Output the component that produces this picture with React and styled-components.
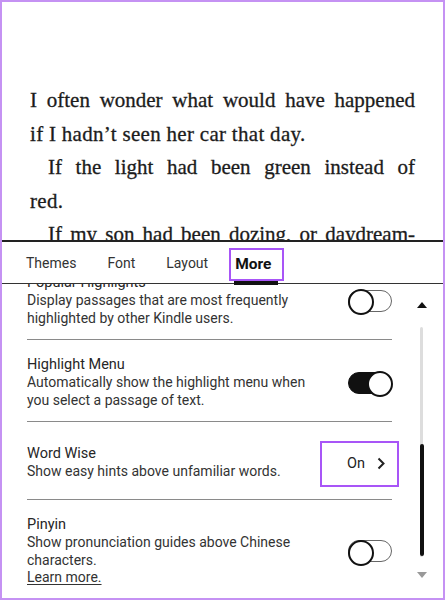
import styled, { createGlobalStyle } from 'styled-components';

const Global = createGlobalStyle`
  html, body { margin: 0; padding: 0; background: #fff; }
  * { box-sizing: border-box; }
`;

const Frame = styled.div`
  width: 445px;
  height: 600px;
  border: 2px solid #c592f3;
  display: flex;
  flex-direction: column;
  overflow: hidden;
  background: #fff;
`;

const Book = styled.div`
  height: 238px;
  overflow: hidden;
  padding: 82px 28px 0 28px;
  font-family: "Liberation Serif", serif;
  font-size: 21px;
  line-height: 33.5px;
  color: #1c1c1c;
  -webkit-text-stroke: 0.3px #1c1c1c;
`;

const BookLine = styled.div`
  white-space: nowrap;
  text-align: ${(p) => (p.$full ? 'justify' : 'left')};
  text-align-last: ${(p) => (p.$full ? 'justify' : 'left')};
  padding-left: ${(p) => (p.$indent ? '18px' : '0')};
  letter-spacing: ${(p) => (p.$full ? '0' : '0.3px')};
`;

const Panel = styled.div`
  flex: 1;
  display: flex;
  flex-direction: column;
  border-top: 2px solid #222;
  font-family: Roboto, sans-serif;
  color: #333;
  min-height: 0;
`;

const Tabs = styled.div`
  height: 42px;
  display: flex;
  align-items: center;
  padding-left: 24px;
  gap: 31px;
  border-bottom: 1.5px solid #333;
`;

const Tab = styled.div`
  font-size: 14px;
  color: #333;
  margin-top: 1px;
`;

const ActiveTab = styled.div`
  position: relative;
  display: flex;
  align-items: center;
  height: 33px;
  margin: 3px 0 0 -10px;
  padding: 0 11px 0 4px;
  border: 2px solid #a855f7;
  font-size: 15.5px;
  font-weight: 700;
  color: #111;

  &::after {
    content: '';
    position: absolute;
    left: 3px;
    right: 4px;
    bottom: -6px;
    height: 4px;
    background: #111;
  }
`;

const Body = styled.div`
  flex: 1;
  display: flex;
  min-height: 0;
  overflow: hidden;
`;

const Items = styled.div`
  width: 390px;
  padding-left: 25px;
`;

const ItemList = styled.div`
  margin-top: -26px;
`;

const Item = styled.div`
  display: flex;
  align-items: center;
  justify-content: space-between;
  padding: 16px 0 12px;
  min-height: ${(p) => p.$minHeight || 0}px;
  border-bottom: ${(p) => (p.$last ? 'none' : '1px solid #8a8a8a')};
`;

const Text = styled.div`
  width: 290px;
  font-size: 14px;
  line-height: 17.5px;
  color: #333;
`;

const Title = styled.div`
  font-size: 14.5px;
  line-height: 18px;
  color: #262626;
`;

const Link = styled.span`
  text-decoration: underline;
  text-underline-offset: 2px;
`;

const Track = styled.div`
  position: relative;
  width: 44px;
  height: 22px;
  border-radius: 11px;
  background: ${(p) => (p.$on ? '#111' : '#fff')};
  border: 1.5px solid ${(p) => (p.$on ? '#111' : '#666')};
  flex-shrink: 0;

  &::after {
    content: '';
    position: absolute;
    top: -1.5px;
    ${(p) => (p.$on ? 'right: -1.5px;' : 'left: -1.5px;')}
    width: 22px;
    height: 22px;
    border-radius: 50%;
    background: #fff;
    border: 2px solid #111;
  }
`;

const ValueButton = styled.div`
  display: flex;
  align-items: center;
  gap: 12px;
  flex-shrink: 0;
  width: 79px;
  height: 46px;
  margin: 2px -7px 0 0;
  padding-left: 25px;
  border: 2px solid #a855f7;
  font-size: 14.5px;
  color: #222;
`;

const Scroll = styled.div`
  flex: 1;
  display: flex;
  flex-direction: column;
  align-items: center;
  padding: 18px 0 0 8px;
`;

const Rail = styled.div`
  position: relative;
  width: 3px;
  height: 230px;
  margin: 19px 0 15px;
  background: #ddd;
  border-radius: 2px;
`;

const Thumb = styled.div`
  position: absolute;
  left: -0.5px;
  width: 4px;
  top: 117px;
  height: 112px;
  border-radius: 2px;
  background: #111;
`;

const Arrow = ({ up }) => (
  <svg width="10" height="6" viewBox="0 0 10 6">
    <path d={up ? 'M0 6 L5 0 L10 6 Z' : 'M0 0 L5 6 L10 0 Z'} fill={up ? '#111' : '#999'} />
  </svg>
);

const Chevron = () => (
  <svg width="8" height="13" viewBox="0 0 8 13">
    <path d="M1.5 1.5 L6.5 6.5 L1.5 11.5" fill="none" stroke="#222" strokeWidth="2" />
  </svg>
);

export default function App() {
  return (
    <>
      <Global />
      <Frame>
        <Book>
          <BookLine $full>I often wonder what would have happened</BookLine>
          <BookLine>if I hadn’t seen her car that day.</BookLine>
          <BookLine $full $indent>If the light had been green instead of</BookLine>
          <BookLine>red.</BookLine>
          <BookLine $full $indent>If my son had been dozing, or daydream-</BookLine>
        </Book>
        <Panel>
          <Tabs>
            <Tab>Themes</Tab>
            <Tab>Font</Tab>
            <Tab>Layout</Tab>
            <ActiveTab>More</ActiveTab>
          </Tabs>
          <Body>
            <Items>
              <ItemList>
                <Item>
                  <Text>
                    <Title>Popular Highlights</Title>
                    Display passages that are most frequently highlighted by other Kindle users.
                  </Text>
                  <Track />
                </Item>
                <Item>
                  <Text>
                    <Title>Highlight Menu</Title>
                    Automatically show the highlight menu when you select a passage of text.
                  </Text>
                  <Track $on />
                </Item>
                <Item $minHeight={78}>
                  <Text>
                    <Title>Word Wise</Title>
                    Show easy hints above unfamiliar words.
                  </Text>
                  <ValueButton>
                    On
                    <Chevron />
                  </ValueButton>
                </Item>
                <Item $last>
                  <Text>
                    <Title>Pinyin</Title>
                    Show pronunciation guides above Chinese characters.
                    <br />
                    <Link>Learn more.</Link>
                  </Text>
                  <Track />
                </Item>
              </ItemList>
            </Items>
            <Scroll>
              <Arrow up />
              <Rail>
                <Thumb />
              </Rail>
              <Arrow />
            </Scroll>
          </Body>
        </Panel>
      </Frame>
    </>
  );
}
